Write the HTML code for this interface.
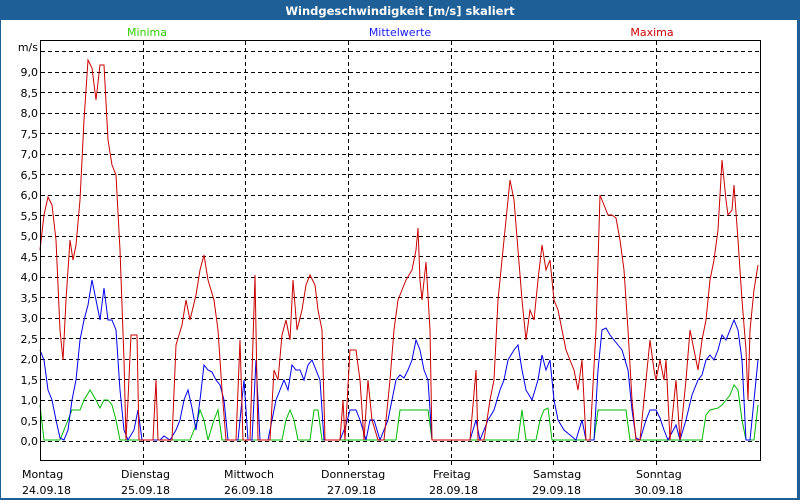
<!DOCTYPE html><html><head><style>
body{margin:0;width:800px;height:500px;overflow:hidden;background:#fff;font-family:"DejaVu Sans","Liberation Sans",sans-serif}
</style></head><body>
<svg width="800" height="500" xmlns="http://www.w3.org/2000/svg" font-family="DejaVu Sans, Liberation Sans, sans-serif" font-size="11">
<rect x="0" y="0" width="800" height="500" fill="#1e5f97"/>
<rect x="1" y="20" width="796" height="478" fill="#fff"/>
<text x="400" y="15" fill="#fff" font-weight="bold" font-size="11.5" text-anchor="middle">Windgeschwindigkeit [m/s] skaliert</text>
<text x="147" y="36" fill="#33cc00" text-anchor="middle">Minima</text>
<text x="400" y="36" fill="#1a1aff" text-anchor="middle">Mittelwerte</text>
<text x="652" y="36" fill="#cc0000" text-anchor="middle">Maxima</text>
<text x="38" y="51" text-anchor="end" fill="#000">m/s</text>
<g stroke="#000" stroke-dasharray="4,3" stroke-width="1">
<path d="M41 51.5H760M41 72.5H760M41 92.5H760M41 113.5H760M41 133.5H760M41 154.5H760M41 174.5H760M41 195.5H760M41 215.5H760M41 236.5H760M41 256.5H760M41 277.5H760M41 297.5H760M41 318.5H760M41 338.5H760M41 359.5H760M41 379.5H760M41 400.5H760M41 420.5H760M41 441.5H760"/>
<path d="M143.5 41V466M245.5 41V466M348.5 41V466M451.5 41V466M553.5 41V466M656.5 41V466"/>
</g>
<g text-anchor="end" fill="#000">
<text x="38" y="76">9,0</text><text x="38" y="97">8,5</text><text x="38" y="117">8,0</text><text x="38" y="138">7,5</text><text x="38" y="158">7,0</text><text x="38" y="179">6,5</text><text x="38" y="199">6,0</text><text x="38" y="220">5,5</text><text x="38" y="240">5,0</text><text x="38" y="261">4,5</text><text x="38" y="281">4,0</text><text x="38" y="302">3,5</text><text x="38" y="322">3,0</text><text x="38" y="343">2,5</text><text x="38" y="363">2,0</text><text x="38" y="384">1,5</text><text x="38" y="404">1,0</text><text x="38" y="425">0,5</text><text x="38" y="445">0,0</text>
</g>
<g fill="none" stroke-width="1">
<polyline stroke="#00bb00" points="40,405 44,440 60,440 68,420 72,410 80,410 84,400 90,390 96,400 100,408 104,400 108,400 112,405 116,420 120,440 190,440 196,425 200,410 204,420 208,440 214,420 218,410 222,440 282,440 286,420 290,410 294,420 298,440 310,440 314,410 318,410 322,440 396,440 400,410 428,410 432,440 518,440 522,410 526,440 536,440 540,420 544,410 548,408 552,440 594,440 598,410 626,410 630,440 702,440 706,415 710,410 718,408 722,405 726,400 730,395 734,385 738,390 742,420 746,440 754,440 758,405"/>
<polyline stroke="#0000ee" points="40,350 44,360 48,390 52,400 56,420 60,438 64,440 68,430 72,400 76,380 80,340 84,320 88,305 92,280 96,300 100,320 104,288 108,320 112,320 116,330 120,390 124,430 128,440 134,430 138,410 142,440 160,440 164,436 170,440 176,430 180,420 184,400 188,390 192,408 196,430 200,400 204,365 208,370 212,372 216,380 220,385 224,400 228,440 238,440 244,380 248,440 252,440 256,360 260,440 268,440 272,420 276,400 280,390 284,380 288,390 292,365 296,370 300,370 304,380 308,365 312,360 316,370 320,380 324,440 340,440 346,425 350,410 356,410 360,420 366,440 370,420 374,420 380,440 388,420 392,400 396,380 400,375 404,378 408,370 412,360 416,340 420,350 424,370 428,380 432,440 470,440 476,420 480,440 488,420 494,410 500,390 504,380 508,360 514,350 518,345 522,370 526,390 532,400 538,380 542,355 546,370 550,360 554,400 558,420 564,430 570,435 576,440 582,420 586,440 594,440 598,370 602,330 606,328 610,335 614,340 618,345 622,350 628,370 632,410 636,438 640,440 646,420 650,410 656,410 660,418 664,430 668,440 676,425 680,440 686,420 692,395 698,380 702,375 706,360 710,355 714,360 718,350 722,335 726,340 730,330 734,320 738,330 742,360 746,440 750,440 754,400 758,360"/>
<polyline stroke="#cc0000" points="40,250 44,215 48,197 52,205 56,240 60,330 63,360 66,300 70,240 73,260 76,245 80,200 84,120 88,60 92,68 96,100 100,65 104,65 108,140 112,165 116,175 120,250 124,360 126,440 128,400 131,335 137,335 139,440 153,440 156,380 158,440 172,440 176,345 182,325 186,300 190,320 196,295 200,270 204,255 208,280 214,300 218,330 222,390 226,440 236,440 240,340 243,440 250,440 255,275 258,440 270,440 274,370 278,380 282,335 286,320 290,340 293,280 297,330 302,310 306,285 310,275 315,285 318,310 322,330 325,440 340,440 343,400 345,440 350,350 356,350 360,380 364,440 368,380 372,420 378,440 384,440 390,380 394,330 398,300 402,290 406,280 412,270 416,250 418,228 420,280 422,300 426,262 430,330 432,440 470,440 476,370 478,440 484,440 490,400 494,380 498,300 502,260 506,220 510,180 514,200 518,250 522,300 526,340 530,310 534,320 538,280 542,245 546,270 550,260 554,300 558,310 562,330 566,350 570,360 574,370 578,390 582,360 586,440 590,440 596,330 600,195 604,205 608,215 612,215 616,218 620,240 624,270 628,330 632,400 636,440 640,440 646,380 650,340 654,370 656,380 660,360 664,380 666,360 670,440 676,380 680,440 686,380 690,330 694,350 698,370 702,340 706,320 710,280 714,260 718,230 722,160 726,200 728,215 732,210 734,185 738,240 742,300 746,350 748,400 750,330 754,290 758,265"/>
</g>
<rect x="40.5" y="40.5" width="720" height="420" fill="none" stroke="#000"/>
<g fill="#000">
<text x="22" y="478">Montag</text><text x="22" y="494">24.09.18</text>
<text x="121" y="478">Dienstag</text><text x="121" y="494">25.09.18</text>
<text x="224" y="478">Mittwoch</text><text x="224" y="494">26.09.18</text>
<text x="321" y="478">Donnerstag</text><text x="327" y="494">27.09.18</text>
<text x="433" y="478">Freitag</text><text x="429" y="494">28.09.18</text>
<text x="533" y="478">Samstag</text><text x="532" y="494">29.09.18</text>
<text x="636" y="478">Sonntag</text><text x="634" y="494">30.09.18</text>
</g>
</svg>
</body></html>
